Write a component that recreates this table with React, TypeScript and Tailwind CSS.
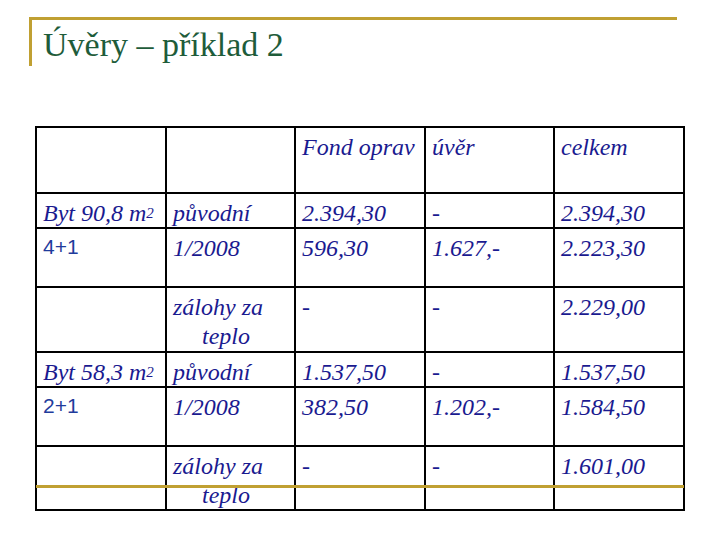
import React from "react";

type CellProps = { children?: React.ReactNode };

function Cell({ children }: CellProps) {
  return (
    <div className="border-r-2 border-b-2 border-black pl-[6px] pt-[5px] font-['Liberation_Serif','Times_New_Roman',serif] text-[24px] leading-[29px] italic text-[#1a1a90]">
      {children}
    </div>
  );
}

function SansCell({ children }: CellProps) {
  return (
    <div className="border-r-2 border-b-2 border-black pl-[6px] pt-[6px] font-['Liberation_Sans',Arial,sans-serif] text-[21px] leading-[24px] text-[#1f3c9c] not-italic">
      {children}
    </div>
  );
}

function Zalohy() {
  return (
    <Cell>
      <span className="block">zálohy za</span>
      <span className="block pl-[29px]">teplo</span>
    </Cell>
  );
}

function M2({ n }: { n: string }) {
  return (
    <>
      Byt {n} m<sup className="text-[15px] relative top-[-3px]">2</sup>
    </>
  );
}

export default function App() {
  return (
    <div className="relative w-[720px] h-[540px] bg-white overflow-hidden flex flex-col font-['Liberation_Serif','Times_New_Roman',serif]">
      <div className="ml-[29px] mt-[17px] w-[648px] h-[49px] border-t-[3px] border-l-[3px] border-[#c0a032] pl-[11px] pt-[5px]">
        <h1 className="font-['Liberation_Serif','Times_New_Roman',serif] text-[34px] leading-[40px] text-[#1e5c3a] font-normal">Úvěry – příklad 2</h1>
      </div>

      <div className="ml-[35px] mt-[60px] w-[650px] border-t-2 border-l-2 border-black grid grid-cols-[130px_129px_130px_129px_130px] grid-rows-[66px_35px_59px_65px_35px_59px_64px]">
        <Cell />
        <Cell />
        <Cell>Fond oprav</Cell>
        <Cell>úvěr</Cell>
        <Cell>celkem</Cell>

        <Cell><M2 n="90,8" /></Cell>
        <Cell>původní</Cell>
        <Cell>2.394,30</Cell>
        <Cell>-</Cell>
        <Cell>2.394,30</Cell>

        <SansCell>4+1</SansCell>
        <Cell>1/2008</Cell>
        <Cell>596,30</Cell>
        <Cell>1.627,-</Cell>
        <Cell>2.223,30</Cell>

        <Cell />
        <Zalohy />
        <Cell>-</Cell>
        <Cell>-</Cell>
        <Cell>2.229,00</Cell>

        <Cell><M2 n="58,3" /></Cell>
        <Cell>původní</Cell>
        <Cell>1.537,50</Cell>
        <Cell>-</Cell>
        <Cell>1.537,50</Cell>

        <SansCell>2+1</SansCell>
        <Cell>1/2008</Cell>
        <Cell>382,50</Cell>
        <Cell>1.202,-</Cell>
        <Cell>1.584,50</Cell>

        <Cell />
        <Zalohy />
        <Cell>-</Cell>
        <Cell>-</Cell>
        <Cell>1.601,00</Cell>
      </div>

      <div className="absolute left-[36px] top-[485px] w-[648px] h-[3px] bg-[#c0a032]" />
    </div>
  );
}
